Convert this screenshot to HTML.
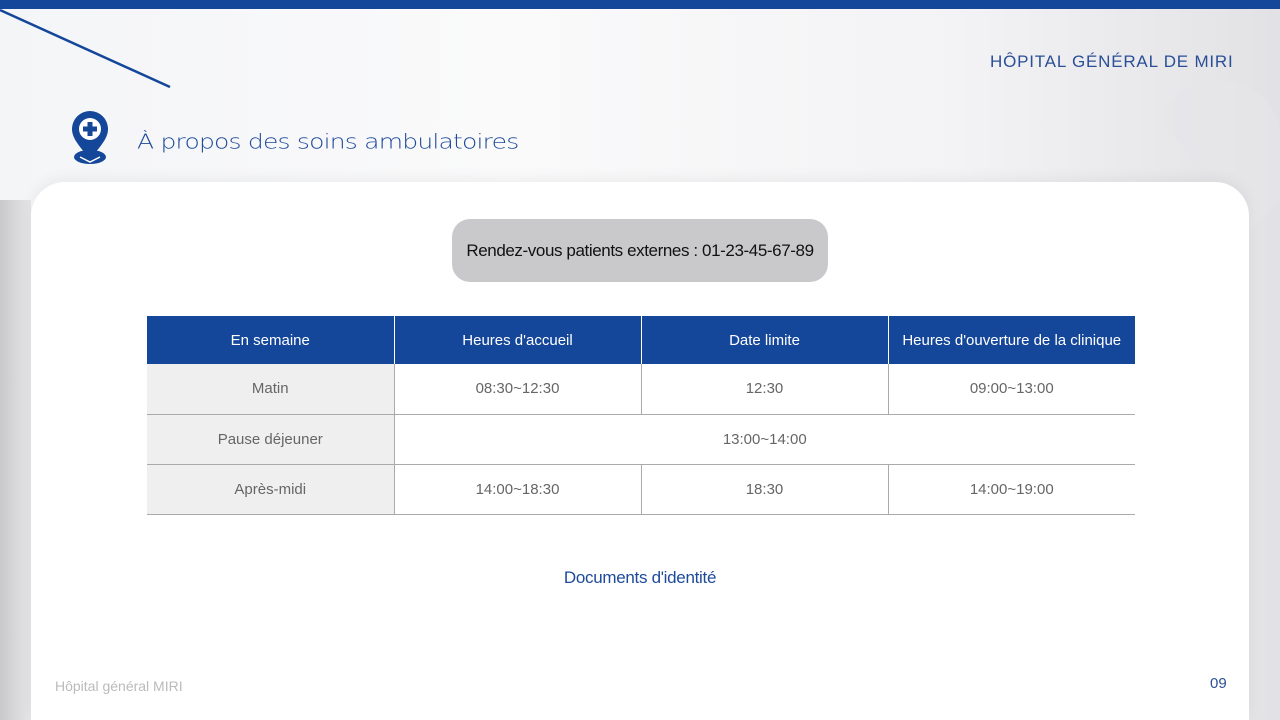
<!DOCTYPE html>
<html><head><meta charset="utf-8"><style>
*{margin:0;padding:0;box-sizing:border-box}
html{width:1280px;height:720px;overflow:hidden}
body{width:1280px;height:720px;overflow:hidden;position:relative;font-family:"Liberation Sans",sans-serif;background:linear-gradient(90deg,#f4f5f7 0%,#fafafb 40%,#f3f3f5 75%,#e2e2e5 100%)}
.top{position:absolute;left:0;top:0;width:1280px;height:9px;background:#14469a}
.left{position:absolute;left:0;top:200px;width:31px;height:520px;background:linear-gradient(90deg,#c9c9cc,#e6e6e8)}
.card{position:absolute;left:31px;top:182px;width:1218px;height:538px;background:#fff;border-radius:34px 34px 0 0;box-shadow:0 -4px 14px rgba(0,0,0,.05)}
.brand{position:absolute;left:990px;top:52px;font-size:17px;letter-spacing:.8px;color:#2a4f96}
.title{position:absolute;left:137px;top:130px;font-size:25px;color:#1e4a9a;letter-spacing:-.8px;transform:scaleY(.8);transform-origin:left top;font-family:"DejaVu Sans",sans-serif;font-weight:200}
.pill{position:absolute;left:452px;top:219px;width:376px;height:63px;border-radius:18px;background:#c9c9cb;font-size:17px;color:#111;text-align:center;line-height:63px;letter-spacing:-.4px}
table{position:absolute;left:147px;top:316px;border-collapse:collapse;width:988px;font-size:15px}
th{background:#14469a;color:#fff;font-weight:normal;height:48px;border-left:1px solid #fff;width:247px}
th:first-child{border-left:none}
td{height:50px;text-align:center;color:#666;border-bottom:1px solid #aaa;border-left:1px solid #aaa}
td.g{background:#efeff0;border-left:none}
.docs{position:absolute;left:0;width:1280px;top:568px;text-align:center;font-size:17px;color:#1e4a9a;letter-spacing:-.3px}
.foot{position:absolute;left:55px;top:678px;font-size:14px;color:#bbb}
.num{position:absolute;left:1210px;top:675px;font-size:15px;color:#2a4f96}
</style></head><body>
<div class="top"></div>
<svg style="position:absolute;left:0;top:0" width="1280" height="260">
<line x1="0" y1="10" x2="170" y2="87" stroke="#14469a" stroke-width="2.5"/>
<path d="M1160 120 C1180 60 1280 70 1280 140 L1280 200 L1250 230 Z" fill="#e6e6e9" opacity=".6"/>
<g fill="#14469a"><ellipse cx="90" cy="157" rx="16" ry="7"/>
<path d="M90 111 a18 18 0 0 1 18 18 c0 11 -10 19 -18 31 c-8 -12 -18 -20 -18 -31 a18 18 0 0 1 18 -18z"/></g>
<path d="M80 157 l10 5 l10 -5" fill="none" stroke="#fff" stroke-width="1.5"/>
<circle cx="90" cy="129" r="11" fill="#fff"/>
<path d="M87.5 122h5v4.5h4.5v5h-4.5v4.5h-5v-4.5h-4.5v-5h4.5z" fill="#14469a"/>
</svg>
<div class="brand">HÔPITAL GÉNÉRAL DE MIRI</div>
<div class="title">À propos des soins ambulatoires</div>
<div class="left"></div>
<div class="card"></div>
<div class="pill">Rendez-vous patients externes : 01-23-45-67-89</div>
<table>
<tr><th>En semaine</th><th>Heures d'accueil</th><th>Date limite</th><th>Heures d'ouverture de la clinique</th></tr>
<tr><td class="g">Matin</td><td>08:30~12:30</td><td>12:30</td><td>09:00~13:00</td></tr>
<tr><td class="g">Pause déjeuner</td><td colspan="3">13:00~14:00</td></tr>
<tr><td class="g">Après-midi</td><td>14:00~18:30</td><td>18:30</td><td>14:00~19:00</td></tr>
</table>
<div class="docs">Documents d'identité</div>
<div class="foot">Hôpital général MIRI</div>
<div class="num">09</div>
</body></html>
